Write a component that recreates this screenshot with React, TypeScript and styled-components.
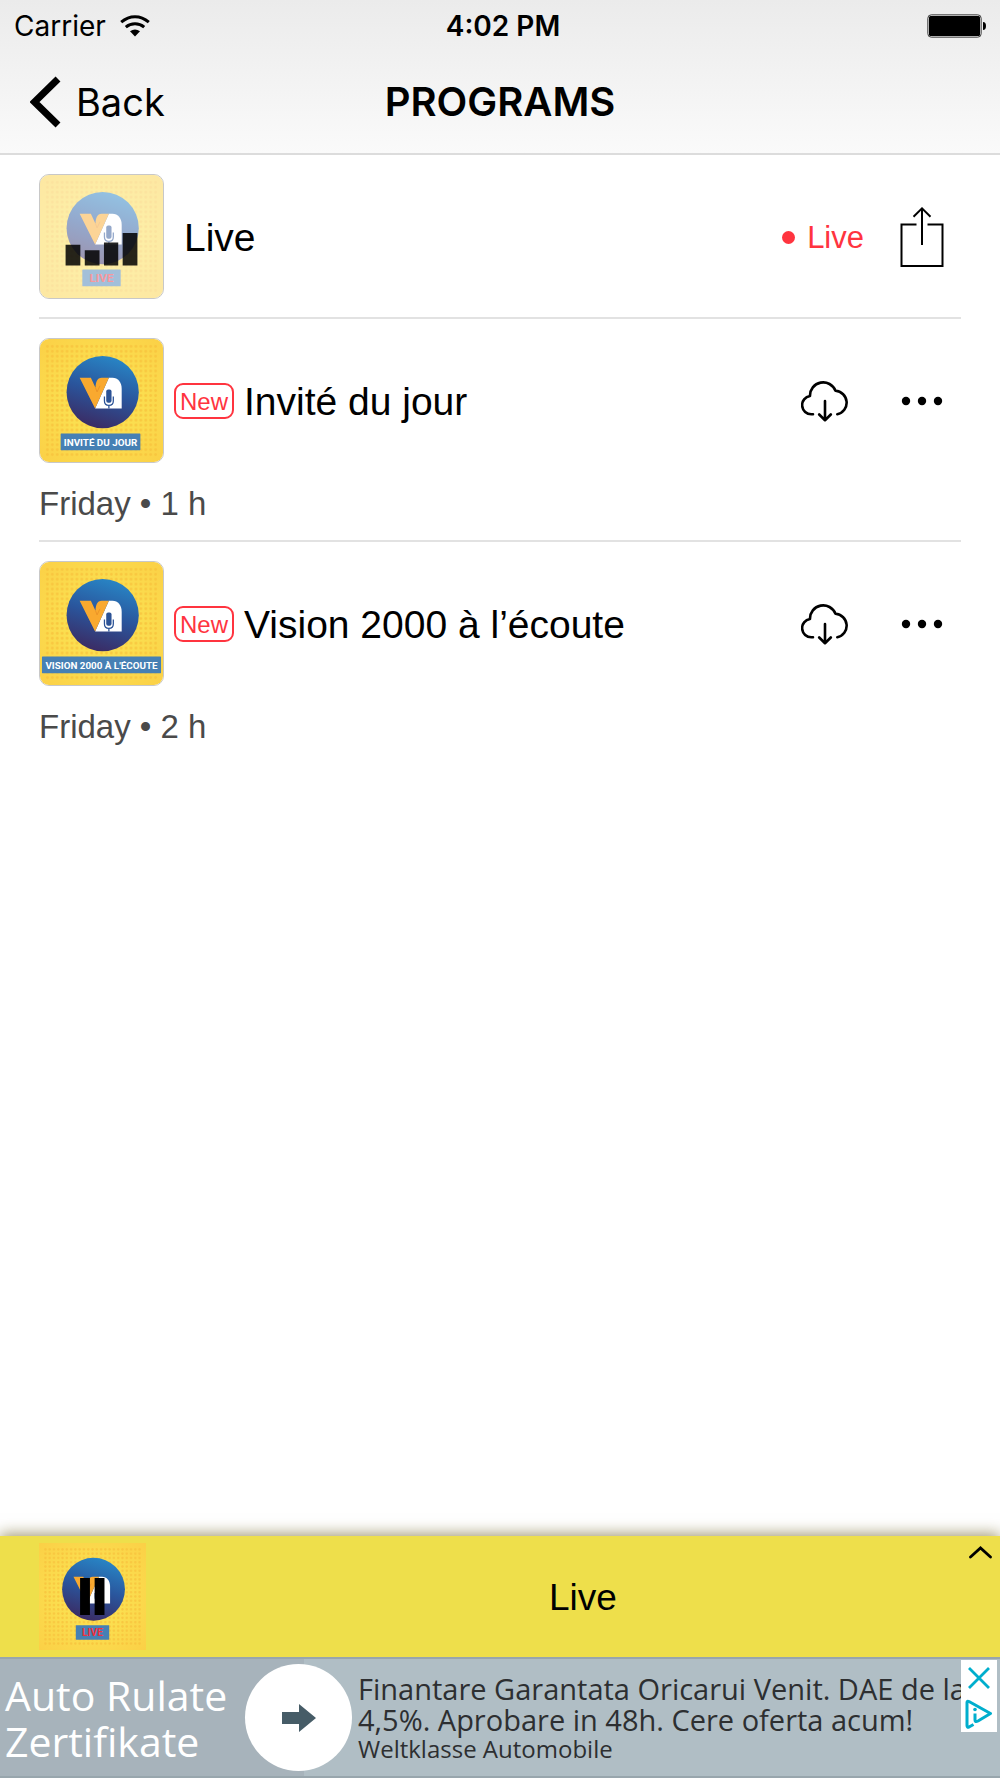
import React, { useId } from "react";
import styled, { createGlobalStyle } from "styled-components";

const sans = `"Liberation Sans", Arial, Helvetica, sans-serif`;
const system = `Inter, "Liberation Sans", sans-serif`;
const adFont = `"Open Sans", "Noto Sans", sans-serif`;
const red = "#ff343f";

const GlobalStyle = createGlobalStyle`
  *, *::before, *::after { box-sizing: border-box; }
  body { margin: 0; background: #fff; color: #000; font-family: ${sans}; }
  button { padding: 0; border: 0; background: none; color: inherit; font: inherit; cursor: pointer; }
  h1, h2, p, ul { margin: 0; padding: 0; }
  svg { display: block; }
`;

const Page = styled.div`
  display: flex;
  flex-direction: column;
  min-height: 100vh;
`;

const Header = styled.header`
  background: linear-gradient(#ebebeb, #fafafa);
  border-bottom: 2px solid #dcdcdc;
  font-family: ${system};
`;

const StatusBar = styled.div`
  display: grid;
  grid-template-columns: 1fr auto 1fr;
  align-items: center;
  height: 51px;
  padding: 0 14px;
  font-size: 28px;
  line-height: 32px;
`;

const Carrier = styled.div`
  display: flex;
  align-items: center;
  gap: 14px;
`;

const Time = styled.span`
  padding-left: 6px;
  font-weight: 600;
`;

const Battery = styled.div`
  justify-self: end;
`;

const NavBar = styled.nav`
  display: grid;
  grid-template-columns: 1fr auto 1fr;
  align-items: center;
  height: 102px;
  padding: 0 30px;
`;

const BackButton = styled.button`
  display: flex;
  align-items: center;
  justify-self: start;
  gap: 15px;
  font-size: 38px;
  line-height: 48px;
`;

const NavTitle = styled.h1`
  font-size: 40px;
  line-height: 48px;
  font-weight: 600;
`;

const ProgramList = styled.ul`
  flex: 1;
  padding: 0 39px;
  list-style: none;
`;

const Program = styled.li`
  padding: 19px 0 18px;
  & + & {
    border-top: 2px solid #e2e2e2;
  }
`;

const ProgramRow = styled.div<{ $gap: number }>`
  display: flex;
  align-items: center;
  gap: ${(p) => p.$gap}px;
`;

const Cover = styled.button`
  flex: none;
  width: 125px;
  height: 125px;
  overflow: hidden;
  border: 1px solid #c8c8c8;
  border-radius: 10px;
`;

const NewBadge = styled.span`
  flex: none;
  width: 60px;
  height: 36px;
  border: 2px solid ${red};
  border-radius: 9px;
  color: ${red};
  font-size: 24px;
  line-height: 34px;
  text-align: center;
`;

const ProgramTitle = styled.h2`
  flex: 1;
  padding-top: 3px;
  font-size: 39px;
  line-height: 44px;
  font-weight: 400;
`;

const Actions = styled.div`
  display: flex;
  align-items: center;
  gap: 19px;
`;

const IconButton = styled.button`
  display: grid;
  place-items: center;
  width: 78px;
  height: 78px;
`;

const LiveFlag = styled.span`
  display: flex;
  align-items: center;
  gap: 12px;
  padding-top: 2px;
  color: ${red};
  font-size: 31px;
  line-height: 36px;
  &::before {
    content: "";
    width: 13px;
    height: 13px;
    border-radius: 50%;
    background: currentColor;
  }
`;

const Meta = styled.p`
  margin-top: 22px;
  color: #4a4a4a;
  font-size: 33px;
  line-height: 37px;
`;

const Player = styled.section`
  position: relative;
  display: flex;
  align-items: center;
  gap: 20px;
  padding: 7px 0 7px 39px;
  background: #eedf4b;
  box-shadow: 0 -2px 14px rgba(95, 80, 10, 0.6);
`;

const PlayerCover = styled.button`
  flex: none;
  width: 107px;
  height: 107px;
`;

const PlayerTitle = styled.p`
  flex: 1;
  padding-top: 2px;
  font-size: 37px;
  line-height: 44px;
  text-align: center;
`;

const ExpandButton = styled.button`
  position: absolute;
  top: 0;
  right: 0;
  padding: 10px 8px;
`;

const Ad = styled.aside`
  position: relative;
  border-top: 2px solid #98a6ad;
  border-bottom: 2px solid #98a6ad;
  background: #b0bec5;
  font-family: ${adFont};
`;

const AdLink = styled.a`
  display: flex;
  align-items: center;
  height: 117px;
  overflow: hidden;
  background: linear-gradient(90deg, #a7b3bb 304px, #b0bec5 304px);
  color: #2d2f31;
  text-decoration: none;
`;

const AdHeadline = styled.span`
  flex: none;
  width: 245px;
  padding-left: 5px;
  color: #fff;
  font-size: 41px;
  line-height: 46px;
`;

const AdArrow = styled.span`
  display: grid;
  flex: none;
  place-items: center;
  width: 107px;
  height: 107px;
  border-radius: 50%;
  background: #fff;
`;

const AdCopy = styled.span`
  display: flex;
  flex-direction: column;
  padding-left: 6px;
  white-space: nowrap;
`;

const AdText = styled.span`
  font-size: 29px;
  line-height: 31px;
`;

const AdBrand = styled.span`
  font-size: 24px;
  line-height: 27px;
`;

const AdControls = styled.div`
  position: absolute;
  top: 1px;
  right: 3px;
  display: flex;
  flex-direction: column;
  width: 36px;
  background: #fff;
`;

const AdControl = styled.button`
  display: grid;
  place-items: center;
  height: 36px;
`;

type ArtProps = {
  label: string;
  labelX: number;
  labelWidth: number;
  labelSize?: number;
  labelColor?: string;
  faded?: boolean;
  overlay?: "equalizer" | "pause";
};

function Art({ label, labelX, labelWidth, labelSize = 12, labelColor = "#fff", faded, overlay }: ArtProps) {
  const id = useId();
  return (
    <svg width="100%" height="100%" viewBox="0 0 125 125" aria-hidden="true">
      <defs>
        <radialGradient id={`${id}b`} r="0.7">
          <stop offset="0.4" stopColor="#fbdf50" />
          <stop offset="1" stopColor="#fbd046" />
        </radialGradient>
        <linearGradient id={`${id}c`} x1="0.65" y1="0" x2="0.35" y2="1">
          <stop offset="0" stopColor="#2886c6" />
          <stop offset="0.5" stopColor="#2a559c" />
          <stop offset="1" stopColor="#3b2a62" />
        </linearGradient>
        <pattern id={`${id}d`} width="5" height="5" patternUnits="userSpaceOnUse">
          <circle cx="2.5" cy="2.5" r="1.4" fill="#f8c23c" />
        </pattern>
      </defs>
      <g opacity={faded ? 0.5 : 1}>
        <rect width="125" height="125" fill={`url(#${id}b)`} />
        <rect x="5" y="5" width="115" height="115" fill={`url(#${id}d)`} opacity="0.8" />
        <circle cx="63.7" cy="54" r="36.7" fill={`url(#${id}c)`} />
        <path d="M56 70.7 70 39.3h3.7c5.5 0 9.3 4.8 9.3 11v20.4z" fill="#fff" />
        <path d="M40.3 39.3H51.7L56.4 49.5C56.6 44 58 39.3 62.7 39.3H70L56 70.7z" fill="#f9a92f" />
        <path d="M56.4 49.5 58 53.7 61 47.5" fill="none" stroke="#e88d25" strokeWidth="0.8" />
        <rect x="67.3" y="51.3" width="5.4" height="13.4" rx="2" fill="#2b5296" />
        <path d="M65.5 58.5v4.5q0 4.5 4.5 4.5t4.500-4.500v-4.500M70 67.500v3.200" fill="none" stroke="#2b5296" strokeWidth="1.3" />
        <rect x={labelX} y="96" width={labelWidth} height="17" rx="0.5" fill="#4680b4" />
        <text
          x={labelX + labelWidth / 2}
          y="109"
          textAnchor="middle"
          fill={labelColor}
          fontFamily="Roboto, 'Liberation Sans', sans-serif"
          fontWeight="700"
          fontSize={labelSize}
        >
          {label}
        </text>
      </g>
      {overlay === "equalizer" && (
        <path d="M26 71h15v21H26zM45.500 76.500h15V92h-15zM65 68.500h14.500V92H65zM84 59h15v33H84z" fill="#000" opacity="0.85" />
      )}
      {overlay === "pause" && <path d="M48 41h11.500v43H48zM65 41h11.500v43H65z" fill="#000" />}
    </svg>
  );
}

function WifiIcon() {
  return (
    <svg width="30" height="22" viewBox="0 0 30 22" aria-hidden="true">
      <g fill="none" stroke="#000" strokeWidth="3">
        <path d="M1.200 7.200Q7.500 1.700 15 1.700T28.800 7.200" />
        <path d="M5.800 12.200Q9.800 8.800 15 8.800T24.200 12.200" />
      </g>
      <path d="M10 16.300Q15 12.800 20 16.300L15 21.500z" />
    </svg>
  );
}

function BatteryIcon() {
  return (
    <svg width="59" height="24" viewBox="0 0 59 24" aria-hidden="true">
      <rect x="0.8" y="0.8" width="53.4" height="22.4" rx="3.5" fill="#ddd" stroke="#444" />
      <rect x="2" y="2" width="51" height="20" rx="1.5" />
      <path d="M56 8q3 0 3 4t-3 4z" />
    </svg>
  );
}

function CloudIcon() {
  return (
    <svg width="48" height="42" viewBox="0 0 48 42" aria-hidden="true">
      <g fill="none" stroke="#000" strokeWidth="2.6" strokeLinecap="round" strokeLinejoin="round">
        <path d="M12 34.300H10.500A9.200 9.200 0 0 1 9 16 13.200 13.200 0 0 1 34.500 10.800 11.900 11.900 0 0 1 36.300 34.300" />
        <path d="M24 21V40M18.200 34.500 24 40.200 29.800 34.500" />
      </g>
    </svg>
  );
}

function ShareIcon() {
  return (
    <svg width="44" height="60" viewBox="0 0 44 60" fill="none" stroke="#000" strokeWidth="2" aria-hidden="true">
      <path d="M16.500 17.500H1.500V59H42.500V17.500H27.500M22 38V2M13.500 9.800 22 1.400 30.500 9.800" />
    </svg>
  );
}

function DotsIcon() {
  return (
    <svg width="42" height="10" viewBox="0 0 42 10" aria-hidden="true">
      <circle cx="5" cy="5" r="4.2" />
      <circle cx="21" cy="5" r="4.2" />
      <circle cx="37" cy="5" r="4.2" />
    </svg>
  );
}

const episodes = [
  { title: "Invité du jour", meta: "Friday • 1 h", label: "INVITÉ DU JOUR", labelX: 21, labelWidth: 81, labelSize: 10 },
  { title: "Vision 2000 à l’écoute", meta: "Friday • 2 h", label: "VISION 2000 À L'ÉCOUTE", labelX: 2, labelWidth: 121, labelSize: 10 },
];

export default function App() {
  return (
    <Page>
      <GlobalStyle />
      <Header>
        <StatusBar>
          <Carrier>
            Carrier
            <WifiIcon />
          </Carrier>
          <Time>4:02 PM</Time>
          <Battery>
            <BatteryIcon />
          </Battery>
        </StatusBar>
        <NavBar>
          <BackButton type="button">
            <svg width="31" height="52" viewBox="0 0 31 52" aria-hidden="true">
              <path d="M28 3 4.500 26 28 49" fill="none" stroke="#000" strokeWidth="7" />
            </svg>
            Back
          </BackButton>
          <NavTitle>PROGRAMS</NavTitle>
        </NavBar>
      </Header>

      <ProgramList>
        <Program>
          <ProgramRow $gap={20}>
            <Cover type="button" aria-label="Play Live">
              <Art label="LIVE" labelX={43} labelWidth={39} labelColor="#f0303c" faded overlay="equalizer" />
            </Cover>
            <ProgramTitle>Live</ProgramTitle>
            <Actions>
              <LiveFlag>Live</LiveFlag>
              <IconButton type="button" aria-label="Share">
                <ShareIcon />
              </IconButton>
            </Actions>
          </ProgramRow>
        </Program>
        {episodes.map(({ title, meta, ...art }) => (
          <Program key={title}>
            <ProgramRow $gap={10}>
              <Cover type="button" aria-label={`Play ${title}`}>
                <Art {...art} />
              </Cover>
              <NewBadge>New</NewBadge>
              <ProgramTitle>{title}</ProgramTitle>
              <Actions>
                <IconButton type="button" aria-label="Download">
                  <CloudIcon />
                </IconButton>
                <IconButton type="button" aria-label="More">
                  <DotsIcon />
                </IconButton>
              </Actions>
            </ProgramRow>
            <Meta>{meta}</Meta>
          </Program>
        ))}
      </ProgramList>

      <Player>
        <PlayerCover type="button" aria-label="Pause">
          <Art label="LIVE" labelX={43} labelWidth={39} labelColor="#f0303c" overlay="pause" />
        </PlayerCover>
        <PlayerTitle>Live</PlayerTitle>
        <ExpandButton type="button" aria-label="Expand player">
          <svg width="23" height="13" viewBox="0 0 23 13" aria-hidden="true">
            <path d="M1.500 11 11.500 2 21.500 11" fill="none" stroke="#000" strokeWidth="2.8" strokeLinecap="round" />
          </svg>
        </ExpandButton>
      </Player>

      <Ad>
        <AdLink href="#ad">
          <AdHeadline>
            Auto Rulate
            <br />
            Zertifikate
          </AdHeadline>
          <AdArrow>
            <svg width="34" height="30" viewBox="0 0 34 30" aria-hidden="true">
              <path d="M0 9h17V1l17 14-17 14v-8H0z" fill="#465c67" />
            </svg>
          </AdArrow>
          <AdCopy>
            <AdText>Finantare Garantata Oricarui Venit. DAE de la</AdText>
            <AdText>4,5%. Aprobare in 48h. Cere oferta acum!</AdText>
            <AdBrand>Weltklasse Automobile</AdBrand>
          </AdCopy>
        </AdLink>
        <AdControls>
          <AdControl type="button" aria-label="Close ad">
            <svg width="22" height="22" viewBox="0 0 22 22" aria-hidden="true">
              <path d="M1 1 21 21M21 1 1 21" stroke="#00aecd" strokeWidth="2.8" />
            </svg>
          </AdControl>
          <AdControl type="button" aria-label="About this ad">
            <svg width="28" height="30" viewBox="0 0 28 30" fill="none" stroke="#00aecd" strokeWidth="3" aria-hidden="true">
              <path d="M8.500 25.500 4 28q-2 .7-2-1.500V3.500Q2 1.500 4 2.500L25.500 14.500 13 22Q10 23.500 10 21V14.500" strokeLinejoin="round" />
              <circle cx="10" cy="10.500" r="1.8" fill="#00aecd" stroke="none" />
            </svg>
          </AdControl>
        </AdControls>
      </Ad>
    </Page>
  );
}
